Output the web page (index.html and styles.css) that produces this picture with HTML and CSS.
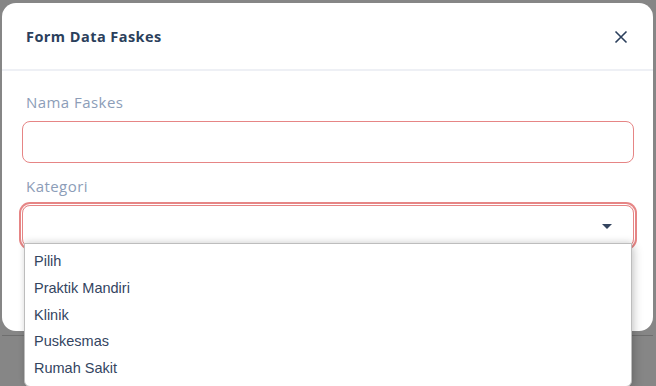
FILE: index.html
```html
<!DOCTYPE html>
<html lang="id">
<head>
    <meta charset="UTF-8">
    <meta name="viewport" content="width=device-width, initial-scale=1.0">
    <title>Form Data Faskes</title>
    <link rel="stylesheet" href="styles.css">
</head>
<body>
    <div class="backdrop">
        <div class="modal">
            <div class="modal-header">
                <h2 class="modal-title">Form Data Faskes</h2>
                <button class="close-btn" aria-label="Tutup">
                    <svg width="14" height="14" viewBox="0 0 14 14">
                        <path d="M1.5 1.5 L12.5 12.5 M12.5 1.5 L1.5 12.5" stroke="#2b3f5c" stroke-width="1.6" fill="none"/>
                    </svg>
                </button>
            </div>
            <div class="modal-body">
                <label class="field-label">Nama Faskes</label>
                <input type="text" class="field-input">

                <label class="field-label second">Kategori</label>
                <div class="select-wrap">
                    <div class="field-select">
                        <span class="caret"></span>
                    </div>
                    <ul class="options">
                        <li>Pilih</li>
                        <li>Praktik Mandiri</li>
                        <li>Klinik</li>
                        <li>Puskesmas</li>
                        <li>Rumah Sakit</li>
                    </ul>
                </div>
            </div>
        </div>
        <div class="page-line"></div>
    </div>
</body>
</html>
```

FILE: styles.css
```css
* {
    box-sizing: border-box;
}
body {
    margin: 0;
    font-family: "Open Sans", sans-serif;
    background-color: #868686;
    height: 386px;
    overflow: hidden;
}
.backdrop {
    padding: 3px 3px 0 2px;
}
.modal {
    background: white;
    height: 328px;
    border-radius: 14px;
}
.modal-header {
    height: 68px;
    display: flex;
    align-items: center;
    justify-content: space-between;
    padding: 0 25px 0 24px;
    border-bottom: 2px solid #eef0f5;
}
.modal-title {
    margin: 0;
    font-size: 14.5px;
    font-weight: 700;
    color: #2b3f5c;
    letter-spacing: 0.45px;
}
.close-btn {
    background: none;
    border: none;
    padding: 0;
    width: 14px;
    height: 14px;
    cursor: pointer;
    margin-top: 1px;
}
.close-btn svg {
    display: block;
}
.modal-body {
    padding: 21px 19px 0 20px;
}
.field-label {
    display: block;
    font-size: 15px;
    line-height: 20px;
    color: #8c9db8;
    letter-spacing: 0.45px;
    padding-left: 4px;
    margin-bottom: 9px;
}
.field-label.second {
    margin-top: 13px;
    margin-bottom: 9px;
}
.field-input {
    display: block;
    width: 100%;
    height: 42px;
    border: 1px solid #e68585;
    border-radius: 8px;
    font-family: inherit;
    outline: none;
}
.select-wrap {
    position: relative;
}
.field-select {
    height: 42px;
    border: 1px solid #e68585;
    border-radius: 8px;
    box-shadow: 0 0 0 1px #fff, 0 0 0 3px #e68585;
    display: flex;
    align-items: center;
    justify-content: flex-end;
    padding-right: 21px;
}
.caret {
    width: 0;
    height: 0;
    border-left: 5px solid transparent;
    border-right: 5px solid transparent;
    border-top: 5px solid #34455f;
    margin-top: 1px;
}
.options {
    position: absolute;
    top: 38px;
    left: 2px;
    right: 2px;
    margin: 0;
    padding: 4px 0 0 0;
    list-style: none;
    background: white;
    border: 1px solid #bdbdbd;
    border-radius: 0 0 6px 6px;
    box-shadow: 0 -2px 6px rgba(0,0,0,0.12), 4px 4px 8px rgba(0,0,0,0.12);
    height: 144px;
    font-family: "Liberation Sans", Arial, sans-serif;
}
.options li {
    font-size: 14.5px;
    line-height: 26.8px;
    color: #34455f;
    padding-left: 9px;
}
.page-line {
    margin-top: 4px;
    border-top: 1px solid #6e6e6e;
}
```
